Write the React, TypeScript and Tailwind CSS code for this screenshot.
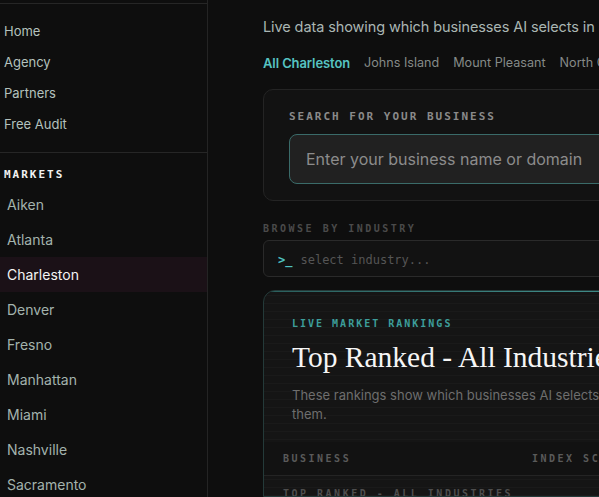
import React from "react";

const sans = { fontFamily: "Inter, 'Noto Sans', sans-serif" };
const mono = { fontFamily: "'DejaVu Sans Mono', 'Liberation Mono', monospace" };
const serif = { fontFamily: "'Liberation Serif', 'DejaVu Serif', serif" };

const nav = ["Home", "Agency", "Partners", "Free Audit"];
const markets = ["Aiken", "Atlanta", "Charleston", "Denver", "Fresno", "Manhattan", "Miami", "Nashville", "Sacramento"];
const tabs = ["All Charleston", "Johns Island", "Mount Pleasant", "North Charleston", "Summerville"];

export default function App() {
  return (
    <div className="flex h-[497px] w-[599px] overflow-hidden bg-[#0e0e0e]" style={sans}>
      <aside className="flex w-[208px] shrink-0 flex-col overflow-hidden border-r border-[#242424] bg-[#0e0e0e]">
        <div className="h-[4px] shrink-0 border-b border-[#262626]" />
        <nav className="flex shrink-0 flex-col border-b border-[#262626] pb-[12px] pt-[12px]">
          {nav.map((n) => (
            <div key={n} className="flex h-[31px] shrink-0 items-center pl-[4px] text-[13px] text-[#b4c2bd]">
              {n}
            </div>
          ))}
        </nav>
        <div className="shrink-0 pl-[4px] pt-[15px] text-[11px] font-bold leading-[14px] tracking-[2px] text-[#f2f2f2]" style={mono}>
          MARKETS
        </div>
        <div className="mt-[5px] flex shrink-0 flex-col">
          {markets.map((m) => (
            <div
              key={m}
              className={
                "flex h-[35px] shrink-0 items-center pl-[7px] text-[14px] " +
                (m === "Charleston" ? "bg-[#1b1117] text-[#f4f4f4]" : "text-[#a3b3ad]")
              }
            >
              {m}
            </div>
          ))}
        </div>
      </aside>
      <main className="flex min-w-0 flex-1 flex-col overflow-hidden pl-[55px]">
        <h1 className="-mt-[37px] shrink-0 whitespace-nowrap text-[30px] leading-[40px] text-white" style={serif}>
          Charleston AI Visibility Index
        </h1>
        <p className="mt-[14px] shrink-0 whitespace-nowrap text-[14.5px] leading-[20px] tracking-[-0.1px] text-[#aab6b3]">
          Live data showing which businesses AI selects in Charleston
        </p>
        <div className="mt-[17px] flex shrink-0 items-center gap-[14px] whitespace-nowrap text-[13px] leading-[18px]">
          {tabs.map((t, i) => (
            <span key={t} className={i === 0 ? "font-semibold tracking-[-0.1px] text-[#56c4c2]" : "text-[12.6px] text-[#858a88]"}>
              {t}
            </span>
          ))}
        </div>
        <section className="mt-[17px] w-[420px] shrink-0 rounded-[10px] border border-[#242424] bg-[#121212] pb-[16px] pl-[25px] pt-[19px]">
          <div className="text-[11px] font-bold tracking-[2px] text-[#8a8a8a]" style={mono}>
            SEARCH FOR YOUR BUSINESS
          </div>
          <div className="mt-[8px] flex h-[50px] items-center rounded-[8px] border border-[#3a6b69] bg-[#212121] pl-[16px] text-[16px] text-[#8c8c8c]">
            Enter your business name or domain
          </div>
        </section>
        <div className="mt-[20px] shrink-0 text-[10px] font-bold tracking-[2.5px] text-[#4a4a4a]" style={mono}>
          BROWSE BY INDUSTRY
        </div>
        <div className="mt-[4px] flex h-[37px] w-[420px] shrink-0 items-center rounded-[6px] border border-[#2a2a2a] bg-[#121212] pl-[14px] pt-[3px] text-[12px]" style={mono}>
          <span className="font-bold text-[#4fc1c0]">&gt;_</span>
          <span className="ml-[8px] text-[#555]">select industry...</span>
        </div>
        <section
          className="relative mt-[13px] w-[620px] flex-1 overflow-hidden rounded-t-[12px] border border-[#243a39] bg-[#151515]"
          style={{
            backgroundImage:
              "repeating-linear-gradient(0deg, rgba(255,255,255,0.018) 0px, rgba(255,255,255,0.018) 1px, transparent 1px, transparent 8px)",
          }}
        >
          <div className="h-[1px] bg-gradient-to-r from-[#2a5e5c] via-[#3f8a87] to-[#2a5e5c]" />
          <div className="pl-[28px] pt-[24px]">
            <div className="text-[10px] font-bold tracking-[2px] text-[#3d9e9b]" style={mono}>
              LIVE MARKET RANKINGS
            </div>
            <div className="mt-[8px] whitespace-nowrap text-[29.5px] leading-[36px] text-[#f6f6f6]" style={serif}>
              Top Ranked - All Industries
            </div>
            <p className="mt-[11px] text-[13px] leading-[19px] text-[#6e6e6e]">
              <span className="whitespace-nowrap">
                These rankings show which businesses AI selects when people ask for local recommendations, and how often AI cites
              </span>
              <br />
              them.
            </p>
          </div>
          <div className="mt-[18px] flex h-[34px] items-center border-b border-[#242424] bg-[#121212] pl-[19px] text-[10px] font-bold tracking-[2.5px] text-[#5a5a5a]" style={mono}>
            <span className="w-[249px]">BUSINESS</span>
            <span>INDEX SCORE</span>
          </div>
          <div className="pl-[19px] pt-[10px] text-[10px] font-bold tracking-[2.5px] text-[#4e4e4e]" style={mono}>
            TOP RANKED - ALL INDUSTRIES
          </div>
        </section>
      </main>
    </div>
  );
}
